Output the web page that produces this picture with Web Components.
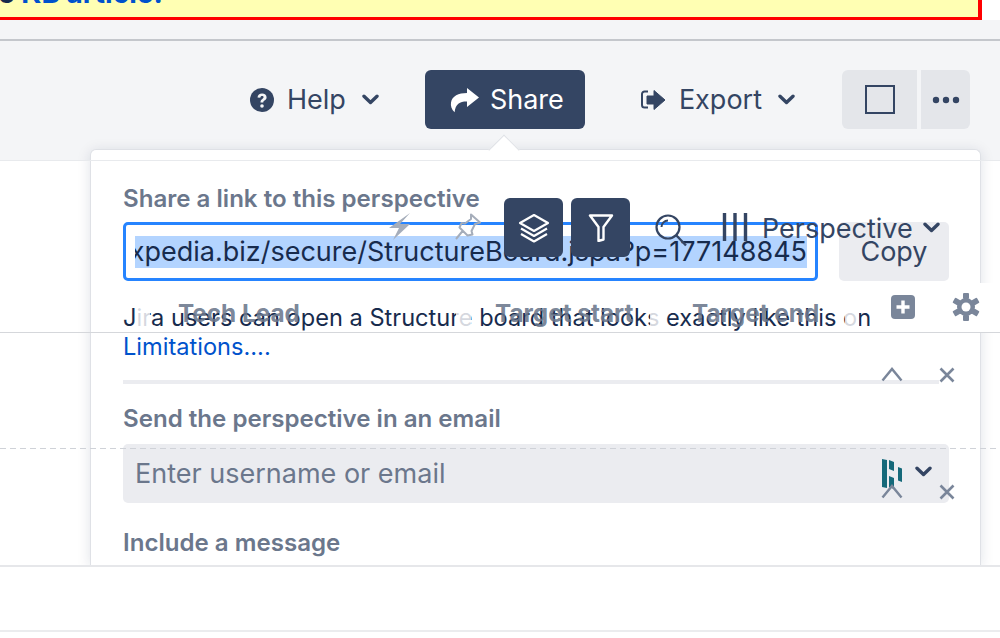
<!DOCTYPE html>
<html>
<head>
<meta charset="utf-8">
<title>Share perspective</title>
<style>
  html, body { margin: 0; height: 638px; overflow: hidden; background: #fff; }
  body { font-family: Inter, "Liberation Sans", sans-serif; color: #344563; }
</style>
</head>
<body>
<page-shell></page-shell>

<script>
const ICONS = {
  help: `<svg width="24" height="24" viewBox="0 0 24 24"><circle cx="12" cy="12" r="12" fill="#344563"/><path d="M7.500 9.400c.2-2.600 2.100-4 4.600-4 2.600 0 4.500 1.500 4.500 3.800 0 1.700-.9 2.600-2.100 3.400-1 .7-1.200 1-1.200 2h-2.800c-.1-1.900.4-2.800 1.800-3.700.8-.5 1.300-1 1.300-1.600 0-.8-.6-1.300-1.500-1.300-1 0-1.700.6-1.800 1.700z" fill="#f4f5f7"/><circle cx="12" cy="18" r="1.800" fill="#f4f5f7"/></svg>`,
  chevron: `<svg width="17" height="11" viewBox="0 0 17 11"><path d="M2 2.200l6.500 6.200L15 2.200" fill="none" stroke="#344563" stroke-width="3.400" stroke-linecap="round" stroke-linejoin="round"/></svg>`,
  share: `<svg width="30" height="26" viewBox="0 0 30 26"><path d="M17 1l12 9.600L17 20v-5.600C10 14.300 5.500 16.500 4.600 25.200 1.400 22.200.5 19 1 15.500 2 9 8.500 6 17 6z" fill="#fff"/></svg>`,
  export: `<svg width="26" height="22" viewBox="0 0 26 22"><path d="M8 2.500H4.500A2.500 2.500 0 0 0 2 5v11a2.500 2.500 0 0 0 2.500 2.500H8" fill="none" stroke="#344563" stroke-width="2"/><path d="M7 7h7V1.500L25 11 14 20.500V15H7z" fill="#344563" stroke="#344563" stroke-linejoin="round"/></svg>`,
  dots: `<svg width="28" height="8" viewBox="0 0 28 8"><circle cx="4" cy="4" r="3.200" fill="#344563"/><circle cx="14" cy="4" r="3.200" fill="#344563"/><circle cx="24" cy="4" r="3.200" fill="#344563"/></svg>`,
  layers: `<svg width="32" height="30" viewBox="0 0 32 30"><path d="M16 2L30 10 16 18 2 10z" fill="none" stroke="#fff" stroke-width="2.200" stroke-linejoin="round"/><path d="M3 15.500l13 7.500 13-7.500M3 21l13 7.500L29 21" fill="none" stroke="#fff" stroke-width="2.200" stroke-linejoin="round"/></svg>`,
  funnel: `<svg width="26" height="28" viewBox="0 0 26 28"><path d="M2 1.500h22L15.500 13v12.500L10.500 27V13z" fill="none" stroke="#fff" stroke-width="2.400" stroke-linejoin="round"/></svg>`,
  search: `<svg width="34" height="36" viewBox="0 0 34 36"><circle cx="14" cy="14" r="11.500" fill="none" stroke="#344563" stroke-width="2.200"/><path d="M7.500 14a6.500 6.500 0 0 1 6.500-6.500" fill="none" stroke="#344563" stroke-width="2"/><path d="M22.500 22.500L32 32.500" stroke="#344563" stroke-width="2.400"/></svg>`,
  columns: `<svg width="26" height="28" viewBox="0 0 26 28"><path d="M2.500 0v28M13 0v28M23.500 0v28" stroke="#344563" stroke-width="3.400"/></svg>`,
  bolt: `<svg width="24" height="28" viewBox="0 0 24 28"><path d="M22 0L12 11h10L5 27l6-12H1z" fill="#a5adba"/></svg>`,
  pin: `<svg width="28" height="28" viewBox="0 0 28 28"><path d="M17 1.500l9 8-5 1.500-3.500 7 1 3.500-5 1-8-8 2-4.500 3.500 .5 6-4.500z M9 17.500L2 26" fill="none" stroke="#a5adba" stroke-width="2" stroke-linejoin="round"/></svg>`,
  plus: `<svg width="24" height="24" viewBox="0 0 24 24"><rect width="24" height="24" rx="4" fill="#7a869a"/><path d="M12 5.500v13M5.500 12h13" stroke="#fff" stroke-width="3.400"/></svg>`,
  gear: `<svg width="28" height="28" viewBox="0 0 28 28"><g fill="#7a869a"><circle cx="14" cy="14" r="9"/><rect x="11" y="0" width="6" height="6" rx="1"/><rect x="11" y="22" width="6" height="6" rx="1"/><rect x="11" y="0" width="6" height="6" rx="1" transform="rotate(60 14 14)"/><rect x="11" y="22" width="6" height="6" rx="1" transform="rotate(60 14 14)"/><rect x="11" y="0" width="6" height="6" rx="1" transform="rotate(120 14 14)"/><rect x="11" y="22" width="6" height="6" rx="1" transform="rotate(120 14 14)"/></g><circle cx="14" cy="14" r="4.500" fill="#fff"/></svg>`,
  caret: `<svg width="22" height="16" viewBox="0 0 22 16"><path d="M1.500 14.500L11 3l9.500 11.500" fill="none" stroke="#7a869a" stroke-width="2.400"/></svg>`,
  close: `<svg width="16" height="16" viewBox="0 0 16 16"><path d="M1.500 1.500l13 13M14.500 1.500l-13 13" stroke="#7a869a" stroke-width="2.600"/></svg>`,
  logo: `<svg width="22" height="31" viewBox="0 0 22 31"><path d="M1 0l5 1v28l-5-1zM8 1l5 2v9l-5-2zM8 17l5 2v11l-5-2zM17 8l4 1.500V23l-4-1.500z" fill="#15697a"/></svg>`
};

// small helper so every element gets an open shadow root the same way
class ShadowBase extends HTMLElement {
  constructor() {
    super();
    this.attachShadow({ mode: "open" });
  }
  connectedCallback() {
    this.shadowRoot.innerHTML = this.markup();
  }
}

class ToolButton extends ShadowBase {
  markup() {
    const icon = this.getAttribute("icon");
    const caret = this.hasAttribute("caret");
    return `
      <style>
        :host { display: flex; align-items: center; height: 59px; border-radius: 6px; font-size: 27px; color: #344563; }
        :host([primary]) { background: #344563; color: #fff; }
        .in { display: flex; align-items: center; }
        svg { display: block; }
        .chev { margin-left: 16px; }
      </style>
      <div class="in" style="gap:${this.getAttribute("gap") || 13}px">
        ${ICONS[icon]}
        <span><slot></slot></span>
      </div>
      ${caret ? `<span class="chev">${ICONS.chevron}</span>` : ""}
    `;
  }
}

class SquareButton extends HTMLElement {
  constructor() {
    super();
    this.attachShadow({ mode: "open" });
    this.shadowRoot.innerHTML = `
      <style>
        :host { display: flex; align-items: center; justify-content: center; height: 59px; background: #e4e6ea; }
        :host([first]) { width: 75px; border-radius: 6px 0 0 6px; }
        :host([last]) { width: 49px; border-radius: 0 6px 6px 0; }
      </style>
      <slot></slot>
    `;
  }
}

class HeaderBar extends ShadowBase {
  markup() {
    return `
      <style>
        :host { display: block; background: #f4f5f7; height: 140px; box-sizing: border-box; padding-top: 19px; }
        .rule { height: 2px; background: #c4c7cc; }
        .row { display: flex; align-items: center; margin-top: 29px; padding-left: 250px; }
        .sq { width: 26px; height: 25px; border: 2px solid #344563; }
      </style>
      <div class="rule"></div>
      <div class="row">
        <tool-button icon="help" caret style="margin-right:46px">Help</tool-button>
        <tool-button icon="share" primary gap="10" style="width:160px;padding-left:25px;box-sizing:border-box">Share</tool-button>
        <tool-button icon="export" caret style="margin-left:55px;margin-right:47px">Export</tool-button>
        <square-button first><div class="sq"></div></square-button>
        <square-button last style="margin-left:4px">${ICONS.dots}</square-button>
      </div>
    `;
  }
}

class ShareForm extends ShadowBase {
  markup() {
    return `
      <style>
        :host { display: block; position: absolute; left: 90px; top: 149px; width: 891px; height: 416px; box-sizing: border-box;
          background: #fff; border: 1px solid #dfe1e6; border-bottom: 0; border-radius: 6px 6px 0 0;
          box-shadow: 0 2px 14px rgba(9,30,66,.13); padding: 34px 32px 0; color: #172b4d; }
        .tip { position: absolute; left: 402px; top: -11px; width: 21px; height: 21px; background: #fff; transform: rotate(45deg); border-left: 1px solid #dfe1e6; border-top: 1px solid #dfe1e6; }
        h4 { margin: 0; font-size: 24.1px; line-height: 30px; font-weight: 600; color: #6b778c; position: relative; }
        .link { display: flex; gap: 21px; margin-top: 8px; }
        .url { flex: none; width: 695px; height: 59px; box-sizing: border-box; border: 3px solid #2684ff; border-radius: 5px; display: flex; align-items: center; padding-left: 9px; font-size: 27px; white-space: nowrap; color: #172b4d; background: #fff; }
        .url span { background: #b3d4ff; line-height: 32px; display: block; width: 672px; direction: rtl; overflow: hidden; }
        .copy { flex: none; width: 110px; height: 59px; background: #ebecf0; border-radius: 5px; font-size: 27px; color: #344563; display: flex; align-items: center; justify-content: center; }
        p { margin: 22px 0 0; font-size: 23.6px; line-height: 29px; white-space: nowrap; color: #172b4d; }
        a { color: #0052cc; text-decoration: none; }
        hr { border: 0; height: 4px; background: #ebecf0; width: 816px; margin: 19px 0 20px; }
        .pick { width: 826px; height: 59px; background: #ebecf0; border-radius: 5px; margin-top: 10px; display: flex; align-items: center; padding-left: 12px; box-sizing: border-box; font-size: 27px; color: #6b778c; }
        .msg { margin-top: 25px; }
      </style>
      <div class="tip"></div>
      <h4>Share a link to this perspective</h4>
      <div class="link">
        <div class="url"><span>&lrm;https://structure.expedia.biz/secure/StructureBoard.jspa?p=177148845&lrm;</span></div>
        <div class="copy">Copy</div>
      </div>
      <p>Jira users can open a Structure board that looks exactly like this on<br><a>Limitations....</a></p>
      <hr>
      <h4>Send the perspective in an email</h4>
      <div class="pick">Enter username or email</div>
      <h4 class="msg">Include a message</h4>
    `;
  }
}

class GridOverlay extends ShadowBase {
  markup() {
    const dark = (x, svg) => `<div class="tile" style="left:${x}px">${svg}</div>`;
    const icon = (x, y, svg) => `<div class="ic" style="left:${x}px;top:${y}px">${svg}</div>`;
    const head = (x, t) => `<span class="th" style="left:${x}px">${t}</span>`;
    const mask = (x, w) => `<div class="mask" style="left:${x}px;width:${w}px"></div>`;
    return `
      <style>
        :host { display: block; position: absolute; inset: 0; pointer-events: none; color: #344563; }
        .tile { position: absolute; top: 198px; width: 59px; height: 59px; background: #344563; border-radius: 6px; display: flex; align-items: center; justify-content: center; }
        .ic { position: absolute; line-height: 0; }
        .th { position: absolute; top: 298px; font-size: 24.300px; line-height: 30px; font-weight: 700; color: rgba(107,119,140,.9); white-space: nowrap; }
        .persp { position: absolute; left: 762px; top: 212px; font-size: 27px; line-height: 33px; color: #344563; }
        .hl { position: absolute; left: 0; width: 1000px; }
        .mask { position: absolute; background: rgba(255,255,255,.82); top: 305px; height: 26px; }
        .side { position: absolute; left: 872px; top: 283px; width: 128px; height: 49px; background: #fff; }
        .foot { position: absolute; left: 0; top: 565px; width: 1000px; height: 73px; background: #fff; }
        .dash { height: 1px; background: repeating-linear-gradient(90deg, #cfd2d8 0 6px, transparent 6px 10px); }
      </style>
      <div class="foot"></div>
      <div class="side"></div>
      <div class="hl" style="top:160px;height:1px;background:#e8eaed"></div>
      <div class="hl" style="top:332px;height:1px;background:#d5d7db"></div>
      <div class="hl dash" style="top:448px"></div>
      <div class="hl" style="top:565px;height:2px;background:#e6e7ea"></div>
      <div class="hl" style="top:630px;height:2px;background:#ebecee"></div>
      ${mask(137, 13)}
      ${mask(456, 15)}
      ${mask(650, 10)}
      ${mask(845, 14)}
      ${icon(388, 213, ICONS.bolt)}
      ${icon(454, 213, ICONS.pin)}
      ${dark(504, ICONS.layers)}
      ${dark(571, ICONS.funnel)}
      ${icon(654, 213, ICONS.search)}
      ${icon(722, 213, ICONS.columns)}
      <span class="persp">Perspective</span>
      ${icon(923, 222, ICONS.chevron)}
      ${head(178, "Tech Lead")}
      ${head(495, "Target start")}
      ${head(692, "Target end")}
      ${icon(891, 295, ICONS.plus)}
      ${icon(952, 293, ICONS.gear)}
      ${icon(881, 366, ICONS.caret)}
      ${icon(939, 367, ICONS.close)}
      ${icon(881, 459, ICONS.logo)}
      ${icon(915, 466, ICONS.chevron)}
      ${icon(881, 483, ICONS.caret)}
      ${icon(939, 484, ICONS.close)}
    `;
  }
}

class PageShell extends ShadowBase {
  markup() {
    return `
      <style>
        :host { display: block; position: relative; width: 1000px; height: 638px; overflow: hidden; }
        .banner { height: 20px; width: 982px; box-sizing: border-box; background: #ffffb3; border-bottom: 3px solid #f00; border-right: 4px solid #f00; position: relative; overflow: hidden; }
        .banner span { position: absolute; left: -2px; top: -21px; font-size: 28px; line-height: 28px; font-weight: 700; color: #172b4d; white-space: nowrap; }
        .banner a { color: #0052cc; }
      </style>
      <div class="banner"><span>e <a>KB article.</a></span></div>
      <header-bar></header-bar>
      <share-form></share-form>
      <grid-overlay></grid-overlay>
    `;
  }
}

customElements.define("tool-button", ToolButton);
customElements.define("square-button", SquareButton);
customElements.define("header-bar", HeaderBar);
customElements.define("share-form", ShareForm);
customElements.define("grid-overlay", GridOverlay);
customElements.define("page-shell", PageShell);
</script>
</body>
</html>
